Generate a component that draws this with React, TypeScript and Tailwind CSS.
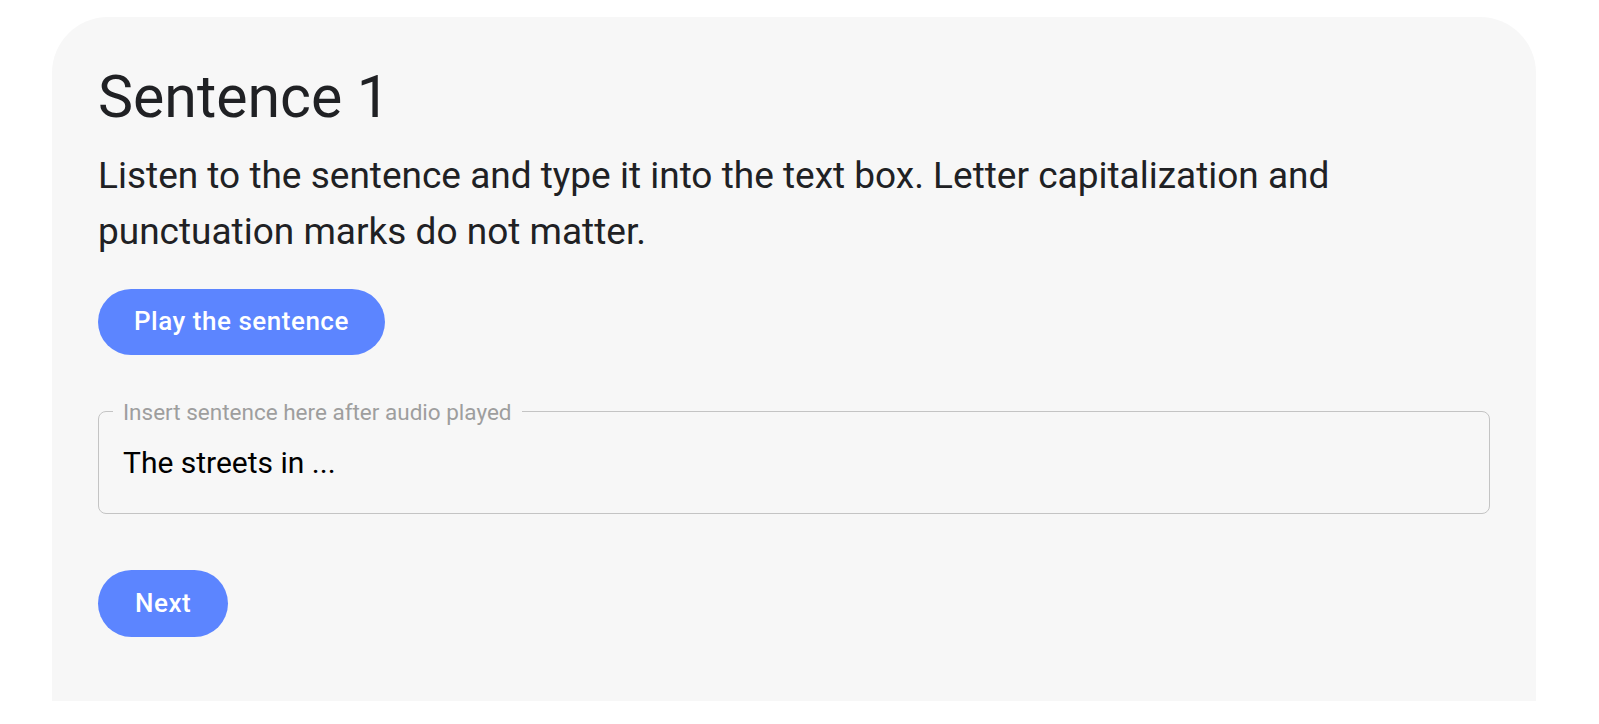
import { useState } from "react";

export default function App() {
  const [answer, setAnswer] = useState("The streets in ...");

  return (
    <div className="min-h-screen bg-white pt-[17px] pl-[52px]" style={{ fontFamily: "Roboto, 'Liberation Sans', sans-serif" }}>
      {/* Card */}
      <div className="w-[1484px] h-[684px] bg-[#f7f7f7] rounded-t-[56px] px-[46px] pt-[45px]">
        <h1 className="text-[59px] leading-[1.2] font-normal text-[#202124]">Sentence 1</h1>
        <p className="mt-[15px] text-[37px] leading-[56px] text-[#202124] max-w-[1320px]">
          Listen to the sentence and type it into the text box. Letter capitalization and punctuation marks do not matter.
        </p>

        <button className="mt-[29px] h-[66px] px-[36px] rounded-full bg-[#5c85ff] text-white text-[26px] font-medium tracking-[0.02em]">
          Play the sentence
        </button>

        {/* Answer field */}
        <fieldset className="mt-[44px] border-[1.5px] border-[#c4c4c4] rounded-[8px] px-[24px] pb-[32px]">
          <legend className="ml-[-10px] px-[10px] text-[22.5px] leading-[26px] text-[#9e9e9e]">
            Insert sentence here after audio played
          </legend>
          <input
            value={answer}
            onChange={(e) => setAnswer(e.target.value)}
            className="block w-full mt-[20px] bg-transparent text-[30px] leading-[36px] text-black outline-none"
          />
        </fieldset>

        <button className="mt-[56px] block h-[67px] px-[37px] rounded-full bg-[#5c85ff] text-white text-[26px] font-medium tracking-[0.02em]">
          Next
        </button>
      </div>
    </div>
  );
}
